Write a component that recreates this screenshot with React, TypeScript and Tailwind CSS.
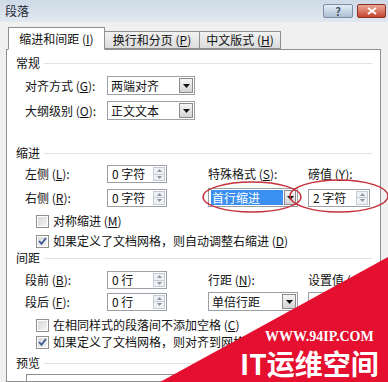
// Word "段落" paragraph dialog (Win7 look) with a red-circle annotation and a site watermark.

const FONT = { fontFamily: '"Noto Sans CJK SC", "Noto Sans", sans-serif' };

// Section caption followed by a thin rule to the right edge.
function Group({ title }: { title: string }) {
  return (
    <div className="flex items-center h-[16px]">
      <span className="leading-none">{title}</span>
      <div className="flex-1 ml-[4px] border-t border-[#dde3e8]" />
    </div>
  );
}

function Label({ text, k, w }: { text: string; k: string; w?: string }) {
  return (
    <span className={`leading-none whitespace-nowrap ${w ?? ""}`}>
      {text} (<u>{k}</u>):
    </span>
  );
}

function DropArrow() {
  return (
    <div className="w-[14px] m-[1px] flex items-center justify-center border border-[#8b8b8b] bg-gradient-to-b from-[#f4f4f4] to-[#d4d4d4]">
      <svg width="7" height="4" viewBox="0 0 7 4">
        <path d="M0 0h7L3.5 4z" fill="#111" />
      </svg>
    </div>
  );
}

function Select({ value, selected, w = "w-[88px]" }: { value: string; selected?: boolean; w?: string }) {
  return (
    <div className={`${w} h-[19px] flex border border-[#9aa0a6] bg-white`}>
      <div className="flex-1 flex items-center pl-[2px]">
        <span
          className={
            selected
              ? "h-[15px] w-[72px] flex items-center pl-[1px] bg-[#3a8ff0] text-white leading-none"
              : "pl-[1px] leading-none"
          }
        >
          {value}
        </span>
      </div>
      <DropArrow />
    </div>
  );
}

function Spin({ value, w = "w-[60px]" }: { value: string; w?: string }) {
  return (
    <div className={`${w} h-[18px] flex border border-[#9aa0a6] bg-white`}>
      <div className="flex-1 flex items-center pl-[4px] leading-none">{value}</div>
      <div className="w-[12px] my-[1px] mr-[1px] flex flex-col border border-[#c5ccd3] bg-[#eef1f4]">
        <div className="flex-1 flex items-center justify-center border-b border-[#c5ccd3]">
          <svg width="5" height="3" viewBox="0 0 5 3">
            <path d="M0 3h5L2.5 0z" fill="#8a96a3" />
          </svg>
        </div>
        <div className="flex-1 flex items-center justify-center">
          <svg width="5" height="3" viewBox="0 0 5 3">
            <path d="M0 0h5L2.5 3z" fill="#8a96a3" />
          </svg>
        </div>
      </div>
    </div>
  );
}

function Check({ checked, children }: { checked?: boolean; children: React.ReactNode }) {
  return (
    <div className="flex items-center h-[14px] pl-[20px] whitespace-nowrap">
      <div className="w-[13px] h-[13px] border border-[#8f8f8f] bg-white p-[1px] shrink-0">
        <div className="w-full h-full bg-gradient-to-br from-[#d8d8d8] to-[#f4f4f4] flex items-center justify-center">
          {checked && (
            <svg width="9" height="8" viewBox="0 0 9 8">
              <path d="M1 4l2.5 2.8L8 1" stroke="#3d5a94" strokeWidth="1.8" fill="none" />
            </svg>
          )}
        </div>
      </div>
      <span className="ml-[4px] leading-none">{children}</span>
    </div>
  );
}

export default function App() {
  return (
    <div
      className="relative w-[388px] h-[382px] overflow-hidden bg-[#f0f0f0] text-[12px] text-[#111] flex flex-col"
      style={FONT}
    >
      {/* Title bar */}
      <div className="h-[22px] shrink-0 flex items-center justify-between bg-gradient-to-b from-[#cfdae7] to-[#e1e8f0] pl-[5px] pr-[2px]">
        <span className="text-[12px] leading-none text-[#1e2a38]">段落</span>
        <div className="flex gap-[4px] self-start mt-[4px]">
          <div className="w-[30px] h-[14px] rounded-[2px] border border-[#7d8fa6] bg-gradient-to-b from-[#e4edf6] to-[#aebfd3] flex items-center justify-center text-[11px] leading-none text-[#44536a] font-bold">
            ?
          </div>
          <div className="w-[29px] h-[14px] rounded-[2px] border border-[#8c3022] bg-gradient-to-b from-[#e9a799] to-[#c4432f] flex items-center justify-center">
            <svg width="10" height="8" viewBox="0 0 10 8">
              <path d="M1 1l8 6M9 1L1 7" stroke="#fff" strokeWidth="2" />
            </svg>
          </div>
        </div>
      </div>

      {/* Tabs */}
      <div className="h-[27px] shrink-0 flex items-end pl-[8px] pt-[5px] relative z-10">
        <div className="h-[23px] w-[97px] flex items-center justify-center bg-white border border-[#8e8f8f] border-b-white leading-none -mb-px">
          缩进和间距 (<u>I</u>)
        </div>
        <div className="h-[18px] w-[95px] flex items-center justify-center bg-gradient-to-b from-[#f2f2f2] to-[#dcdcdc] border border-[#8e8f8f] border-l-0 leading-none">
          换行和分页 (<u>P</u>)
        </div>
        <div className="h-[18px] w-[81px] flex items-center justify-center bg-gradient-to-b from-[#f2f2f2] to-[#dcdcdc] border border-[#8e8f8f] border-l-0 leading-none">
          中文版式 (<u>H</u>)
        </div>
      </div>

      {/* Tab panel */}
      <div className="flex-1 ml-[6px] mr-[7px] bg-white border border-[#8e8f8f] pl-[9px] pr-[8px] pt-[5px] flex flex-col">
        <Group title="常规" />
        <div className="mt-[5px] pl-[9px] flex items-center">
          <Label text="对齐方式" k="G" w="w-[82px]" />
          <Select value="两端对齐" />
        </div>
        <div className="mt-[6px] pl-[9px] flex items-center">
          <Label text="大纲级别" k="O" w="w-[82px]" />
          <Select value="正文文本" />
        </div>

        <div className="mt-[25px]">
          <Group title="缩进" />
        </div>
        <div className="mt-[4px] pl-[9px] grid grid-cols-[142px_41px_100px_auto] grid-rows-[18px_19px] gap-y-[5px] items-center">
          <div className="flex items-center">
            <Label text="左侧" k="L" w="w-[82px]" />
            <Spin value="0 字符" />
          </div>
          <div />
          <Label text="特殊格式" k="S" />
          <Label text="磅值" k="Y" />
          <div className="flex items-center">
            <Label text="右侧" k="R" w="w-[82px]" />
            <Spin value="0 字符" />
          </div>
          <div />
          <Select value="首行缩进" selected w="w-[90px]" />
          <Spin value="2 字符" w="w-[62px]" />
        </div>
        <div className="mt-[7px]">
          <Check>对称缩进 (<u>M</u>)</Check>
        </div>
        <div className="mt-[6px]">
          <Check checked>如果定义了文档网格，则自动调整右缩进 (<u>D</u>)</Check>
        </div>

        <div className="mt-[2px]">
          <Group title="间距" />
        </div>
        <div className="mt-[5px] pl-[9px] grid grid-cols-[142px_41px_100px_auto] grid-rows-[18px_19px] gap-y-[3px] items-center">
          <div className="flex items-center">
            <Label text="段前" k="B" w="w-[82px]" />
            <Spin value="0 行" />
          </div>
          <div />
          <Label text="行距" k="N" />
          <Label text="设置值" k="A" />
          <div className="flex items-center">
            <Label text="段后" k="F" w="w-[82px]" />
            <Spin value="0 行" />
          </div>
          <div />
          <Select value="单倍行距" w="w-[90px]" />
          <div className="w-[62px] h-[19px] border border-[#9aa0a6] bg-white" />
        </div>
        <div className="mt-[7px]">
          <Check>在相同样式的段落间不添加空格 (<u>C</u>)</Check>
        </div>
        <div className="mt-[3px]">
          <Check checked>如果定义了文档网格，则对齐到网格 (<u>W</u>)</Check>
        </div>

        <div className="mt-[6px]">
          <Group title="预览" />
        </div>
        <div className="mt-[3px] ml-[10px] flex-1 border border-[#8e8f8f] border-b-0" />
      </div>

      {/* Red hand-drawn circles */}
      <svg className="absolute inset-0 pointer-events-none" width="388" height="382">
        <ellipse cx="252" cy="197" rx="49" ry="15" fill="none" stroke="#c6303c" strokeWidth="1.4" />
        <ellipse cx="339" cy="196" rx="49" ry="16" fill="none" stroke="#c6303c" strokeWidth="1.4" />
      </svg>

      {/* Watermark */}
      <svg className="absolute inset-0 pointer-events-none" width="388" height="382">
        <polygon points="160,382 388,257 388,382" fill="#e5102f" />
      </svg>
      <div
        className="absolute left-[265px] top-[330px] text-[14px] font-bold leading-none text-white"
        style={{ fontFamily: '"Liberation Serif", serif' }}
      >
        WWW.94IP.COM
      </div>
      <div className="absolute left-[240px] top-[349px] text-[28px] font-bold leading-none text-white">
        IT运维空间
      </div>
    </div>
  );
}
